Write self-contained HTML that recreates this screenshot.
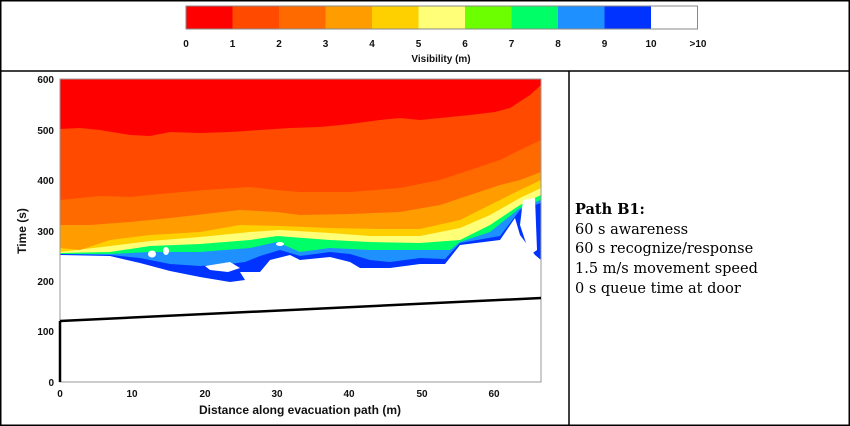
<!DOCTYPE html>
<html><head><meta charset="utf-8"><style>
html,body{margin:0;padding:0;background:#fff}
body{width:850px;height:426px;overflow:hidden;position:relative}
</style></head><body>
<svg width="850" height="426" viewBox="0 0 850 426" xmlns="http://www.w3.org/2000/svg" style="position:absolute;left:0;top:0">
<rect x="0.75" y="0.75" width="848.5" height="424.5" fill="#fff" stroke="#000" stroke-width="1.5"/>
<line x1="0" y1="71" x2="850" y2="71" stroke="#000" stroke-width="1.5"/>
<line x1="569" y1="71" x2="569" y2="426" stroke="#000" stroke-width="1.5"/>
<g stroke="none">
<rect x="186" y="6" width="46.5" height="23" fill="#ff0000"/>
<rect x="232.5" y="6" width="46.5" height="23" fill="#ff4a00"/>
<rect x="279" y="6" width="46.5" height="23" fill="#ff6a00"/>
<rect x="325.5" y="6" width="46.5" height="23" fill="#ff9c00"/>
<rect x="372" y="6" width="46.5" height="23" fill="#ffd000"/>
<rect x="418.5" y="6" width="46.5" height="23" fill="#ffff78"/>
<rect x="465" y="6" width="46.5" height="23" fill="#6cff00"/>
<rect x="511.5" y="6" width="46.5" height="23" fill="#00ff66"/>
<rect x="558" y="6" width="46.5" height="23" fill="#1e90ff"/>
<rect x="604.5" y="6" width="46.5" height="23" fill="#0033ff"/>
<rect x="651" y="6" width="46.5" height="23" fill="#fff"/>
</g>
<rect x="186" y="6" width="511.5" height="23" fill="none" stroke="#888" stroke-width="1"/>
<g font-family="Liberation Sans, sans-serif" font-weight="bold" font-size="10" text-anchor="middle" fill="#111">
<text x="186" y="47">0</text><text x="232.5" y="47">1</text><text x="279" y="47">2</text><text x="325.5" y="47">3</text>
<text x="372" y="47">4</text><text x="418.5" y="47">5</text><text x="465" y="47">6</text><text x="511.5" y="47">7</text>
<text x="558" y="47">8</text><text x="604.5" y="47">9</text><text x="651" y="47">10</text><text x="698" y="47">&gt;10</text>
<text x="441" y="62">Visibility (m)</text>
</g>
<g stroke="none">
<polygon fill="#0033ff" points="60,79 541,79 541,260 535,255 520,235 515,218 500,240 460,245 445,264 420,264 390,268 360,268 350,262 330,257 300,260 290,255 270,260 260,272 240,272 245,280 230,282 200,277 170,271 140,263 110,256 60,255"/>
<polygon fill="#1e90ff" points="60,79 541,79 541,203 520,210 500,236 460,243 445,259 420,258 390,262 370,260 350,254 330,252 300,256 280,250 260,256 245,262 230,264 200,266 170,264 140,258 110,255 60,254"/>
<polygon fill="#00ff66" points="60,79 541,79 541,200 520,208 490,232 460,242 450,250 420,250 370,250 330,248 300,252 277,242 250,248 200,252 150,252 110,254 60,254"/>
<polygon fill="#ffff78" points="60,79 541,79 541,195 520,205 490,225 460,240 420,243 370,242 330,240 277,236 250,240 200,244 150,246 110,252 60,253"/>
<polygon fill="#ffd000" points="60,79 541,79 541,188 520,198 490,215 460,228 420,236 370,236 330,233 280,230 250,232 200,237 150,241 110,246 60,252"/>
<polygon fill="#ff9c00" points="60,79 541,79 541,180 520,190 490,205 460,220 420,229 380,229 330,228 280,226 240,225 200,232 150,235 110,240 80,250 60,248"/>
<polygon fill="#ff6a00" points="60,79 541,79 541,172 520,180 500,185 470,195 440,205 400,212 350,214 300,215 277,212 240,210 205,214 170,218 130,222 90,225 60,225"/>
<polygon fill="#ff4a00" points="60,79 541,79 541,140 520,150 500,160 470,170 440,180 400,188 350,192 300,192 277,190 250,187 205,190 160,194 130,197 100,196 60,200"/>
<polygon fill="#ff0000" points="60,79 541,79 541,85 530,95 510,108 495,112 470,115 440,118 420,120 400,118 380,120 350,124 320,127 290,128 260,130 230,132 200,133 170,132 150,136 130,135 100,130 80,128 60,129"/>
<ellipse cx="152" cy="254" rx="4" ry="3.5" fill="#fff"/>
<ellipse cx="166" cy="251" rx="3" ry="4" fill="#fff"/>
<polygon fill="#fff" points="205,266 230,262 240,268 228,272 210,270"/>
<polygon fill="#fff" points="523,200 535,198 537,250 530,255 525,240 520,225"/>
<ellipse cx="280" cy="244" rx="4" ry="2" fill="#fff"/>
</g>
<rect x="60" y="79" width="481" height="303" fill="none" stroke="#999" stroke-width="1"/>
<line x1="60" y1="321" x2="541" y2="298" stroke="#000" stroke-width="2.5"/>
<line x1="60" y1="321" x2="60" y2="382" stroke="#000" stroke-width="2.5"/>
<g font-family="Liberation Sans, sans-serif" font-weight="bold" font-size="10" fill="#111">
<g text-anchor="end">
<text x="54" y="83">600</text><text x="54" y="134">500</text><text x="54" y="184">400</text>
<text x="54" y="235">300</text><text x="54" y="285">200</text><text x="54" y="335">100</text><text x="54" y="386">0</text>
</g>
<g text-anchor="middle">
<text x="60" y="397">0</text><text x="132" y="397">10</text><text x="205" y="397">20</text><text x="277" y="397">30</text>
<text x="349" y="397">40</text><text x="422" y="397">50</text><text x="494" y="397">60</text>
<text x="300" y="414" font-size="12">Distance along evacuation path (m)</text>
<text x="0" y="0" font-size="12" transform="translate(26,231) rotate(-90)">Time (s)</text>
</g>
</g>
<g font-family="DejaVu Serif, Liberation Serif, serif" font-size="14.5" fill="#000">
<text x="575" y="214" font-weight="bold">Path B1:</text>
<text x="575" y="234">60 s awareness</text>
<text x="575" y="253">60 s recognize/response</text>
<text x="575" y="273">1.5 m/s movement speed</text>
<text x="575" y="293">0 s queue time at door</text>
</g>
</svg>
</body></html>
